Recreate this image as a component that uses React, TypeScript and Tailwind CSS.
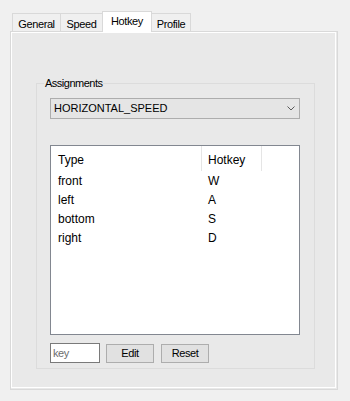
import React from "react";

const rows = [
  { type: "front", key: "W" },
  { type: "left", key: "A" },
  { type: "bottom", key: "S" },
  { type: "right", key: "D" },
];

export default function App() {
  return (
    <div className="w-[350px] h-[401px] bg-[#f0f0f0] pt-[11px] font-['Liberation_Sans',Arial,sans-serif] text-[11px] leading-[13px] text-black overflow-hidden">
      {/* Tab strip */}
      <div className="relative z-10 flex items-start pl-[12px] h-[20px] tracking-[-0.4px]">
        <div className="mt-[2px] h-[18px] w-[48px] border-t border-l border-[#d9d9d9] bg-[#f0f0f0] pt-[4px] text-center">
          General
        </div>
        <div className="mt-[2px] h-[18px] w-[42px] border-t border-l border-[#d9d9d9] bg-[#f0f0f0] pt-[4px] text-center">
          Speed
        </div>
        <div className="h-[21px] w-[50px] border-t border-l border-r border-[#d9d9d9] bg-white pt-[3px] text-center">
          Hotkey
        </div>
        <div className="mt-[2px] h-[18px] w-[39px] border-t border-r border-[#d9d9d9] bg-[#f0f0f0] pt-[4px] text-center">
          Profile
        </div>
      </div>

      {/* Panel */}
      <div className="ml-[10px] w-[328px] h-[359px] border border-[#d9d9d9] bg-[#e9e9e9]">
        <div className="w-[325px] h-[356px] border border-white">
          {/* Group box */}
          <div className="relative mt-[50px] ml-[24px] w-[279px] h-[286px] border border-[#dcdcdc]">
            <span className="absolute left-[7px] top-[-7px] bg-[#e9e9e9] px-[1px] tracking-[-0.5px]">
              Assignments
            </span>

            <div className="pt-[14px] pl-[13px]">
              {/* Combo */}
              <div className="flex items-center justify-between w-[250px] h-[21px] border border-[#adadad] bg-[#e5e5e5] pl-[3px] pr-[4px]">
                <span>HORIZONTAL_SPEED</span>
                <svg width="8" height="5" viewBox="0 0 8 5" className="block">
                  <polyline
                    points="0.5,0.5 4,4 7.5,0.5"
                    fill="none"
                    stroke="#5a5a5a"
                    strokeWidth="1"
                  />
                </svg>
              </div>

              {/* List view */}
              <div className="mt-[26px] w-[250px] h-[190px] border border-[#828790] bg-white text-[12px] leading-[14px]">
                <div className="flex h-[25px]">
                  <div className="w-[151px] border-r border-[#e5e5e5] pl-[7px] pt-[7px]">
                    Type
                  </div>
                  <div className="w-[60px] border-r border-[#e5e5e5] pl-[6px] pt-[7px]">
                    Hotkey
                  </div>
                </div>
                {rows.map((r) => (
                  <div key={r.type} className="flex h-[19px] items-center">
                    <div className="w-[151px] pl-[7px]">{r.type}</div>
                    <div className="pl-[6px]">{r.key}</div>
                  </div>
                ))}
              </div>

              {/* Bottom controls */}
              <div className="mt-[8px] flex items-start tracking-[-0.4px]">
                <div className="w-[50px] h-[20px] border border-[#7a7a7a] bg-white pl-[2px] pt-[3px] text-[#6d6d6d]">
                  key
                </div>
                <button className="ml-[6px] mt-[1px] w-[48px] h-[19px] border border-[#adadad] bg-[#e1e1e1] text-center leading-[13px]">
                  Edit
                </button>
                <button className="ml-[7px] mt-[1px] w-[48px] h-[19px] border border-[#adadad] bg-[#e1e1e1] text-center leading-[13px]">
                  Reset
                </button>
              </div>
            </div>
          </div>
        </div>
      </div>
    </div>
  );
}
